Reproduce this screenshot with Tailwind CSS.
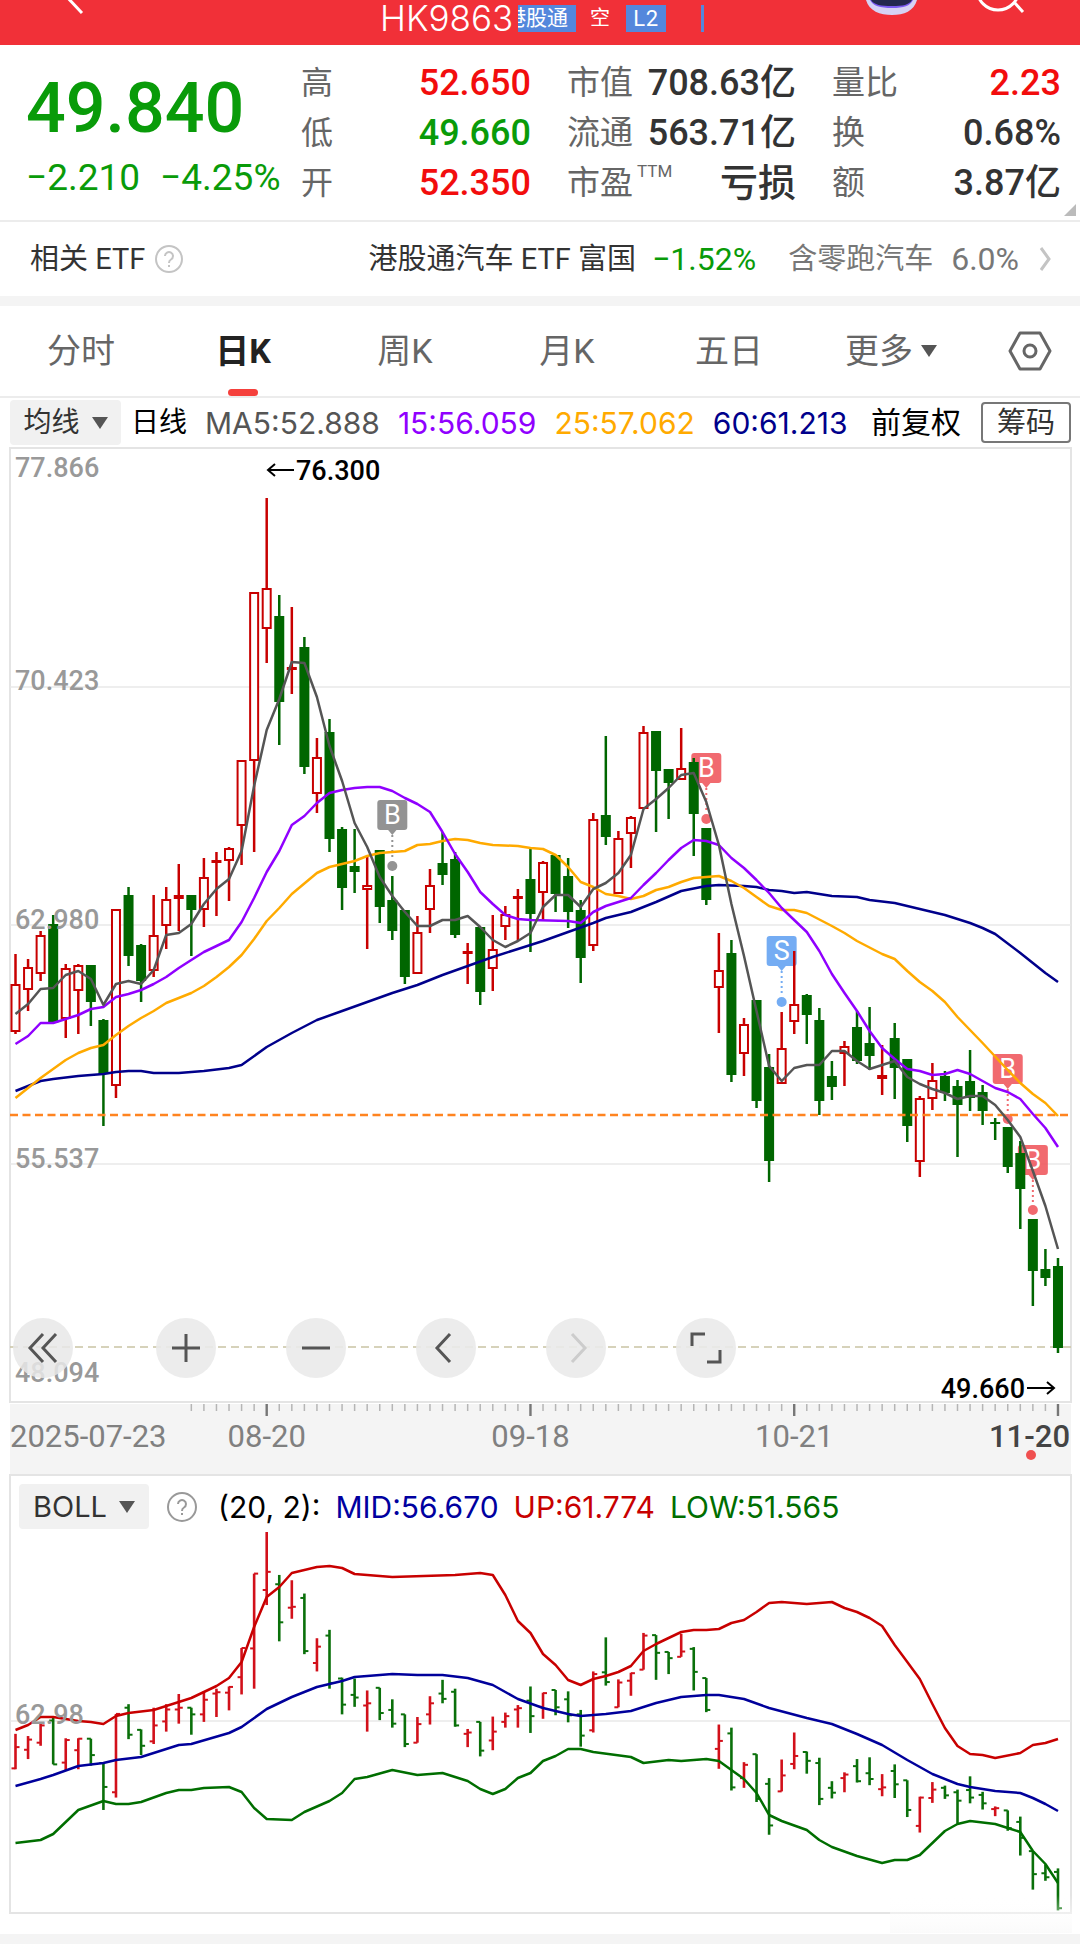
<!DOCTYPE html>
<html lang="zh-CN">
<head>
    <meta charset="UTF-8">
    <meta name="viewport" content="width=device-width, initial-scale=1.0">
    <title>HK9863</title>
    <script src="https://cdn.jsdelivr.net/npm/@tailwindcss/browser@4"></script>
</head>
<body class="bg-white font-['Roboto','Noto_Sans_CJK_SC',sans-serif] text-[#333]">
    <!-- Title bar -->
    <header class="relative flex h-[45px] items-start justify-center overflow-hidden bg-[#f13038] text-white">
        <button aria-label="返回" class="absolute left-[64px] top-0">
            <svg class="block h-4 w-6" viewBox="0 0 24 16" fill="none" stroke="#fff" stroke-width="3"><path d="M2 -4 L18 13"/></svg>
        </button>
        <div class="absolute left-[380px] top-0 flex items-center">
            <h1 class="w-[138px] shrink-0 font-['Inter',sans-serif] text-[35px] leading-[36px] font-light">HK9863</h1>
            <span class="flex h-[27px] w-[58px] shrink-0 justify-end overflow-hidden bg-[#5487dc] pr-2 text-[21px] leading-[26px] whitespace-nowrap">港股通</span>
            <span class="ml-[14px] text-[20px] leading-[27px]">空</span>
            <span class="ml-4 h-[27px] w-[40px] bg-[#5487dc] text-center text-[22px] leading-[27px] tracking-wide">L2</span>
            <span class="ml-[35px] h-[27px] w-[3px] bg-[#5487dc]"></span>
        </div>
        <button aria-label="助手" class="absolute left-[864px] top-0">
            <svg class="block h-4 w-14" viewBox="0 0 56 16"><path d="M2 0C5 11 16 15 28 15S50 11 53 0Z" fill="#d6d2f4"/><path d="M6 0C9 6 16 8 28 8S46 6 49 0Z" fill="#7a5af0"/><path d="M7 0C10 5 17 6 28 6S45 5 48 0Z" fill="#23284e"/></svg>
        </button>
        <button aria-label="搜索" class="absolute left-[976px] top-0">
            <svg class="block h-4 w-[52px]" viewBox="0 0 52 16" fill="none" stroke="#fff" stroke-width="3"><circle cx="22" cy="-11" r="21"/><path d="M38 2 L47 12"/></svg>
        </button>
    </header>

    <!-- Quote summary -->
    <section class="relative flex h-[177px] items-start border-b-2 border-[#ececec] pl-[26px] pr-[19px] pt-[13px]">
        <div class="w-[275px] shrink-0 text-[#099b09]">
            <div class="pt-2 text-[70px] leading-[84px] font-medium">49.840</div>
            <div class="flex gap-5 text-[37px] leading-[56px]"><span>−2.210</span><span>−4.25%</span></div>
        </div>
        <dl class="flex w-[230px] shrink-0 flex-col text-[36px] leading-[50px] font-medium">
            <div class="flex justify-between"><dt class="text-[32px] font-normal text-[#666]">高</dt><dd class="text-[#f20d0d]">52.650</dd></div>
            <div class="flex justify-between"><dt class="text-[32px] font-normal text-[#666]">低</dt><dd class="text-[#099b09]">49.660</dd></div>
            <div class="flex justify-between"><dt class="text-[32px] font-normal text-[#666]">开</dt><dd class="text-[#f20d0d]">52.350</dd></div>
        </dl>
        <dl class="ml-9 flex w-[229px] shrink-0 flex-col text-[36px] leading-[50px] font-medium">
            <div class="flex justify-between"><dt class="text-[33px] font-normal text-[#666]">市值</dt><dd>708.63亿</dd></div>
            <div class="flex justify-between"><dt class="text-[33px] font-normal text-[#666]">流通</dt><dd>563.71亿</dd></div>
            <div class="flex justify-between"><dt class="flex text-[33px] font-normal text-[#666]">市盈<span class="pl-1 text-[17px] leading-[26px]">TTM</span></dt><dd class="text-[38px]">亏损</dd></div>
        </dl>
        <dl class="ml-9 flex grow flex-col text-[36px] leading-[50px] font-medium">
            <div class="flex justify-between"><dt class="text-[33px] font-normal text-[#666]">量比</dt><dd class="text-[#f20d0d]">2.23</dd></div>
            <div class="flex justify-between"><dt class="text-[33px] font-normal text-[#666]">换</dt><dd>0.68%</dd></div>
            <div class="flex justify-between"><dt class="text-[33px] font-normal text-[#666]">额</dt><dd>3.87亿</dd></div>
        </dl>
        <svg class="absolute bottom-1 right-1 h-3 w-3" viewBox="0 0 12 12"><path d="M12 0V12H0Z" fill="#bbb"/></svg>
    </section>

    <!-- Related ETF -->
    <section class="flex h-[74px] items-center pl-[30px] pr-[29px] text-[29px] leading-[40px]">
        <span>相关 ETF</span>
        <button aria-label="说明" class="ml-2">
            <svg class="block h-8 w-8" viewBox="0 0 32 32" fill="none" stroke="#c4c4c4" stroke-width="2"><circle cx="16" cy="16" r="13"/><path d="M12 13a4 4 0 1 1 6 3.500q-2 1.200-2 3.500M16 22v2"/></svg>
        </button>
        <a href="#" class="ml-auto flex items-center">
            <span>港股通汽车 ETF 富国</span>
            <span class="ml-4 text-[32px] text-[#099b09]">−1.52%</span>
            <span class="ml-8 text-[#777]">含零跑汽车</span>
            <span class="ml-[18px] text-[32px] text-[#777]">6.0%</span>
            <svg class="ml-5 h-6 w-3" viewBox="0 0 12 24" fill="none" stroke="#c4c4c4" stroke-width="3"><path d="M2 1L10 12L2 23"/></svg>
        </a>
    </section>
    <div class="h-[10px] bg-[#f4f4f4]"></div>

    <!-- Period tabs -->
    <nav class="flex h-[92px] items-center border-b-2 border-[#ececec] text-[34px] leading-[48px] text-[#666]">
        <button class="w-[15%] text-center">分时</button>
        <button class="relative flex h-full w-[15%] items-center justify-center font-bold text-[#222]">日K<span class="absolute bottom-0 h-[7px] w-[30px] rounded-sm bg-[#f5403c]"></span></button>
        <button class="w-[15%] text-center">周K</button>
        <button class="w-[15%] text-center">月K</button>
        <button class="w-[15%] text-center">五日</button>
        <button class="flex w-[15%] items-center justify-center gap-2">更多<svg class="h-3 w-4" viewBox="0 0 16 12"><path d="M0 0H16L8 12Z" fill="#555"/></svg></button>
        <button aria-label="设置" class="ml-auto mr-7">
            <svg class="block h-11 w-11" viewBox="0 0 44 44" fill="none" stroke="#666" stroke-width="3" stroke-linejoin="round"><path d="M12 4H32L42 22L32 40H12L2 22Z"/><circle cx="22" cy="22" r="6"/></svg>
        </button>
    </nav>

    <!-- Moving averages -->
    <div class="flex h-[49px] items-center whitespace-nowrap pl-[10px] pr-[9px] text-[28px] leading-[40px]">
        <button class="flex h-[45px] w-[111px] shrink-0 items-center justify-center gap-3 rounded-sm bg-[#f1f1f1]">均线<svg class="h-3 w-4" viewBox="0 0 16 12"><path d="M0 0H16L8 12Z" fill="#555"/></svg></button>
        <span class="ml-[10px] text-black">日线</span>
        <div class="ml-[18px] flex gap-[18px] font-['Inter',sans-serif] text-[30px]">
            <span class="text-[#555]">MA5:52.888</span>
            <span class="text-[#9000ff]">15:56.059</span>
            <span class="text-[#ffaa00]">25:57.062</span>
            <span class="text-[#00008b]">60:61.213</span>
        </div>
        <span class="ml-auto text-[30px] text-black">前复权</span>
        <button class="ml-5 h-[41px] w-[90px] shrink-0 rounded-sm border-2 border-[#777] text-[29px] leading-[36px]">筹码</button>
    </div>

    <!-- Candles -->
    <section class="relative">
        <svg id="k-chart" class="block w-full" viewBox="0 447 1080 957"></svg>
        <div class="absolute bottom-[26px] left-[13px] flex">
            <button aria-label="最早" class="mr-[83px] flex size-[60px] items-center justify-center rounded-full bg-[#e8e8e8]/85"><svg class="size-8" viewBox="0 0 32 32" fill="none" stroke="#555" stroke-width="3"><path d="M16 2L3 16L16 30M29 2L16 16L29 30"/></svg></button>
            <div class="flex gap-[70px]">
                <button aria-label="放大" class="flex size-[60px] items-center justify-center rounded-full bg-[#eaeaea]/90"><svg class="size-8" viewBox="0 0 32 32" fill="none" stroke="#555" stroke-width="3"><path d="M16 2V30M2 16H30"/></svg></button>
                <button aria-label="缩小" class="flex size-[60px] items-center justify-center rounded-full bg-[#eaeaea]/90"><svg class="size-8" viewBox="0 0 32 32" fill="none" stroke="#555" stroke-width="3"><path d="M2 16H30"/></svg></button>
                <button aria-label="左移" class="flex size-[60px] items-center justify-center rounded-full bg-[#eaeaea]/90"><svg class="size-8" viewBox="0 0 32 32" fill="none" stroke="#555" stroke-width="3"><path d="M20 2L7 16L20 30"/></svg></button>
                <button aria-label="右移" class="flex size-[60px] items-center justify-center rounded-full bg-[#eaeaea]/90"><svg class="size-8" viewBox="0 0 32 32" fill="none" stroke="#ccc" stroke-width="3"><path d="M12 2L25 16L12 30"/></svg></button>
                <button aria-label="全屏" class="flex size-[60px] items-center justify-center rounded-full bg-[#eaeaea]/90"><svg class="size-8" viewBox="0 0 32 32" fill="none" stroke="#555" stroke-width="3"><path d="M2 14V2H15M30 18V30H17"/></svg></button>
            </div>
        </div>
    </section>

    <!-- Date axis -->
    <svg id="axis" class="block w-full" viewBox="0 1404 1080 70"></svg>

    <!-- BOLL -->
    <section class="relative">
        <svg id="boll-chart" class="block w-full" viewBox="0 1474 1080 460"></svg>
        <div class="absolute left-[19px] top-[10px] flex h-[45px] items-center font-['Inter',sans-serif] text-[30px] leading-[40px] whitespace-nowrap">
            <button class="flex h-full w-[130px] items-center justify-center gap-3 rounded-sm bg-[#f1f1f1] text-[29px]">BOLL<svg class="h-3 w-4" viewBox="0 0 16 12"><path d="M0 0H16L8 12Z" fill="#555"/></svg></button>
            <button aria-label="BOLL说明" class="ml-[17px]">
                <svg class="block h-8 w-8" viewBox="0 0 32 32" fill="none" stroke="#999" stroke-width="2"><circle cx="16" cy="16" r="14"/><path d="M12 13a4 4 0 1 1 6 3.500q-2 1.200-2 3.500M16 22v2"/></svg>
            </button>
            <span class="ml-5 text-black">(20, 2):</span>
            <span class="ml-[15px] text-[#0000a0]">MID:56.670</span>
            <span class="ml-[15px] text-[#c80000]">UP:61.774</span>
            <span class="ml-[15px] text-[#006e00]">LOW:51.565</span>
        </div>
    </section>
    <div class="h-[10px] bg-[#f4f4f4]"></div>

    <script>
        const RED = '#c80000';
        const GREEN = '#006600';

        // [up, high, body top, body bottom, low]
        const candles = [
            [1,954,984,1032,1034],[1,959,967,990,1011],[1,931,935,974,981],[0,915,924,1023,1023],[1,964,968,1019,1038],
            [1,964,965,991,1034],[0,965,965,1002,1026],[0,1019,1020,1074,1126],[1,909,909,1086,1098],[0,887,895,956,966],
            [0,944,945,981,1002],[1,895,935,971,977],[1,887,899,926,949],[1,864,895,899,931],[0,895,895,910,956],
            [1,858,877,910,927],[1,852,860,863,916],[1,847,848,861,901],[1,760,760,826,865],[1,592,592,761,852],
            [1,498,588,629,663],[0,595,616,702,745],[1,607,667,669,694],[0,637,647,767,774],[1,738,757,794,813],
            [0,719,732,839,852],[0,827,829,888,910],[0,829,866,872,893],[1,856,885,890,949],[0,850,850,907,923],
            [0,876,900,931,940],[0,910,910,977,984],[1,916,932,974,974],[1,869,885,910,933],[0,832,863,875,885],
            [0,852,859,935,938],[1,943,951,954,984],[0,927,927,992,1005],[1,915,949,969,991],[1,906,914,927,940],
            [1,889,896,899,940],[0,847,879,914,952],[1,861,862,893,920],[0,855,855,894,912],[0,858,876,912,928],
            [0,900,910,958,983],[1,813,819,946,951],[0,736,815,837,845],[1,831,838,894,894],[1,816,817,834,868],
            [1,726,732,809,809],[0,731,731,771,832],[0,769,769,783,819],[1,728,768,780,780],[0,758,762,814,856],
            [0,828,828,900,905],[1,933,970,988,1033],[0,940,953,1075,1082],[1,1018,1024,1054,1076],[0,1000,1000,1101,1108],
            [0,1054,1067,1161,1182],[1,1012,1048,1084,1084],[1,951,1004,1022,1034],[0,994,995,1015,1044],[0,1008,1020,1101,1115],
            [0,1061,1076,1087,1100],[1,1041,1046,1054,1086],[0,1011,1027,1061,1064],[0,1007,1043,1056,1070],[1,1045,1075,1079,1095],
            [0,1023,1038,1068,1099],[0,1059,1059,1126,1142],[1,1096,1098,1162,1177],[1,1063,1080,1099,1110],[0,1071,1076,1093,1101],
            [0,1080,1086,1105,1157],[0,1050,1081,1098,1111],[0,1085,1092,1111,1125],[0,1118,1122,1124,1140],[0,1127,1127,1167,1173],
            [0,1141,1153,1189,1229],[0,1219,1219,1271,1306],[0,1249,1269,1278,1286],[0,1258,1266,1348,1353]
        ];

        // index, y pairs
        const ma5 = [0,1014,1,1004,2,989,3,988,4,975,5,971,6,979,7,1005,8,984,9,981,10,984,11,970,12,935,13,933,14,924,15,904,16,889,17,879,18,851,19,786,20,730,21,699,22,662,23,663,24,697,25,746,26,781,27,823,28,847,29,877,30,896,31,912,32,926,33,926,34,920,35,920,36,916,37,927,38,940,39,947,40,941,41,933,42,907,43,895,44,895,45,907,46,889,47,883,48,873,49,855,50,809,51,799,52,788,53,775,54,773,55,802,56,845,57,904,58,956,59,1011,60,1066,61,1081,62,1068,63,1065,64,1065,65,1051,66,1051,67,1061,68,1069,69,1065,70,1061,71,1077,72,1084,73,1089,74,1093,75,1099,76,1096,77,1096,78,1105,79,1120,80,1137,81,1171,82,1206,83,1249];
        const ma15 = [0,1044,1,1036,2,1023,3,1023,4,1019,5,1015,6,1009,7,1007,8,997,9,994,10,990,11,984,12,977,13,968,14,960,15,952,16,946,17,940,18,922,19,898,20,872,21,851,22,825,23,816,24,803,25,793,26,790,27,788,28,787,29,787,30,791,31,798,32,804,33,812,34,832,35,854,36,872,37,892,38,904,39,915,40,919,41,920,44,921,45,923,46,912,47,906,48,902,49,898,50,885,51,873,52,860,53,848,54,840,55,841,56,845,57,858,58,868,59,880,60,893,61,908,62,920,63,932,64,951,65,974,66,993,67,1011,68,1031,69,1048,70,1059,71,1069,72,1071,73,1075,74,1074,75,1070,76,1074,77,1081,78,1088,79,1092,80,1099,81,1114,82,1128,83,1147];
        const ma25 = [0,1098,2,1078,4,1060,5,1053,6,1048,7,1045,8,1035,9,1026,10,1018,11,1011,12,1003,13,998,14,993,15,986,16,977,17,967,18,955,19,939,20,921,21,908,22,894,24,873,25,867,26,864,27,861,28,856,29,853,30,852,31,851,32,845,33,844,34,841,35,839,36,840,37,843,38,845,40,846,41,848,42,849,43,855,44,867,45,882,46,887,47,894,48,896,49,899,50,896,51,890,52,887,53,882,54,878,55,877,56,876,57,881,58,888,59,897,60,906,61,910,62,910,63,913,65,926,66,933,67,941,69,954,70,959,71,971,72,982,73,991,74,1002,75,1017,77,1043,79,1070,80,1083,81,1094,82,1103,83,1116];
        const ma60 = [0,1091,2,1081,3,1079,5,1076,7,1074,8,1072,9,1071,10,1071,11,1073,13,1073,15,1071,17,1068,18,1065,20,1047,22,1033,24,1020,26,1011,28,1002,30,993,32,985,34,975,36,966,38,957,40,949,42,941,44,932,46,923,47,918,49,912,51,902,53,891,55,886,56,885,58,886,59,887,60,890,61,891,62,893,63,892,65,896,67,897,68,900,70,903,72,909,74,915,76,923,77,928,78,934,80,953,82,973,83,982];
        const up = [0,1730,1,1725,2,1717,3,1717,4,1719,5,1721,6,1722,7,1724,8,1716,9,1713,11,1710,12,1706,13,1702,14,1698,15,1692,16,1686,17,1678,18,1662,19,1627,20,1597,21,1587,22,1573,24,1567,25,1566,26,1568,27,1574,28,1575,30,1577,35,1575,37,1573,38,1575,39,1595,40,1621,41,1633,42,1654,43,1665,44,1680,45,1685,46,1679,47,1676,48,1672,49,1666,50,1651,51,1644,52,1638,53,1632,54,1630,55,1630,56,1629,57,1623,58,1620,59,1612,60,1603,61,1602,62,1603,63,1604,65,1602,66,1608,67,1612,68,1618,69,1626,70,1645,71,1662,72,1679,73,1704,74,1728,75,1746,76,1754,77,1755,78,1758,80,1753,81,1745,82,1743,83,1739];
        const mid = [0,1786,2,1779,3,1775,5,1766,7,1763,8,1760,10,1757,13,1745,14,1744,17,1733,18,1727,20,1709,22,1697,24,1687,26,1681,27,1677,30,1674,32,1675,34,1675,36,1678,38,1685,40,1699,42,1708,44,1714,45,1716,47,1714,49,1711,51,1703,53,1697,55,1695,56,1695,58,1699,60,1708,63,1718,65,1724,67,1734,69,1745,71,1760,73,1774,75,1784,76,1787,78,1791,80,1793,81,1798,82,1804,83,1811];
        const low = [0,1843,2,1840,3,1834,5,1810,7,1801,8,1804,9,1804,10,1802,12,1793,13,1790,14,1790,15,1788,17,1787,18,1792,19,1808,20,1819,22,1820,23,1812,25,1801,26,1793,27,1779,28,1777,30,1770,32,1775,34,1773,35,1777,36,1781,37,1789,38,1794,39,1789,40,1778,41,1773,42,1761,43,1756,44,1749,45,1749,46,1752,49,1757,50,1763,52,1760,53,1761,55,1759,56,1761,57,1770,58,1779,59,1793,60,1815,61,1821,63,1830,64,1840,65,1847,67,1856,69,1863,70,1860,71,1860,72,1855,73,1843,74,1831,75,1824,76,1821,78,1824,79,1828,80,1832,81,1851,82,1864,83,1883];

        const x = i => 15.5 + i * 12.56;
        const ohlcY = y => 1721 + (y - 925) * 0.4426;

        function line(x1, y1, x2, y2, color, width, extra = '') {
            return `<line x1="${x1}" y1="${y1}" x2="${x2}" y2="${y2}" stroke="${color}" stroke-width="${width}" ${extra}/>`;
        }

        function curve(points, color) {
            let d = '';
            for (let i = 0; i < points.length; i += 2) {
                d += (i ? 'L' : 'M') + x(points[i]).toFixed(1) + ' ' + points[i + 1];
            }
            return `<path d="${d}" fill="none" stroke="${color}" stroke-width="2.5" stroke-linejoin="round"/>`;
        }

        function label(tx, ty, text, color = '#999', size = 27, anchor = 'start', weight = 500) {
            return `<text x="${tx}" y="${ty}" font-size="${size}" font-weight="${weight}" fill="${color}" text-anchor="${anchor}">${text}</text>`;
        }

        function marker(cx, i, top, dot, text, color) {
            return `<g opacity="0.9"><rect x="${cx - 15}" y="${top}" width="30" height="30" rx="3" fill="${color}"/>
                <path d="M${x(i) - 5} ${top + 29}h10l-5 6z" fill="${color}"/>
                ${line(x(i), top + 35, x(i), dot - 6, color, 2, 'stroke-dasharray="2 3"')}
                <circle cx="${x(i)}" cy="${dot}" r="5" fill="${color}"/></g>
                <text x="${cx}" y="${top + 24}" font-size="27" fill="#fff" text-anchor="middle">${text}</text>`;
        }

        function drawCandles() {
            let s = '<rect x="10" y="448" width="1061" height="954" fill="none" stroke="#e4e4e4" stroke-width="2"/>';
            [687, 925, 1164].forEach(y => { s += line(10, y, 1071, y, '#e8e8e8', 1.5); });
            s += line(10, 1347, 1071, 1347, '#c9c4a4', 1.5, 'stroke-dasharray="8 5"');
            s += marker(x(30), 30, 800, 866, 'B', '#888');
            s += marker(x(55), 55, 753, 819, 'B', '#f05a60');
            s += marker(x(61), 61, 936, 1002, 'S', '#66a4f2');
            s += marker(x(79), 79, 1054, 1119, 'B', '#f05a60');
            s += marker(x(81), 81, 1145, 1210, 'B', '#f05a60');
            candles.forEach(([isUp, high, top, bottom, lowest], i) => {
                const cx = x(i);
                if (isUp) {
                    s += line(cx, high, cx, top, RED, 2.5) + line(cx, bottom, cx, lowest, RED, 2.5);
                    s += `<rect x="${cx - 4}" y="${top + 1}" width="8" height="${Math.max(bottom - top - 2, 1)}" fill="#fff" stroke="${RED}" stroke-width="2"/>`;
                } else {
                    s += line(cx, high, cx, lowest, GREEN, 2.5);
                    s += `<rect x="${cx - 5}" y="${top}" width="10" height="${bottom - top}" fill="${GREEN}"/>`;
                }
            });
            s += line(10, 1115, 1071, 1115, '#ff8420', 2.4, 'stroke-dasharray="8 4.500"');
            s += curve(ma60, '#00008b') + curve(ma25, '#ffaa00') + curve(ma15, '#9000ff') + curve(ma5, '#555');
            s += label(15, 477, '77.866') + label(15, 690, '70.423') + label(15, 929, '62.980') + label(15, 1168, '55.537') + label(15, 1382, '48.094');
            s += '<path d="M294 470H268M275 464l-7 6l7 6" fill="none" stroke="#000" stroke-width="2"/>' + label(296, 480, '76.300', '#000');
            s += label(1025, 1398, '49.660', '#000', 27, 'end') + '<path d="M1027 1388H1054M1047 1382l7 6l-7 6" fill="none" stroke="#000" stroke-width="2"/>';
            document.getElementById('k-chart').innerHTML = s;
        }

        function drawAxis() {
            let s = '<rect x="10" y="1404" width="1061" height="70" fill="#f4f4f4"/>';
            for (let i = 14; i < 84; i++) {
                const major = [20, 41, 62, 83].includes(i);
                s += line(x(i), 1404, x(i), major ? 1416 : 1411, major ? '#777' : '#b5b5b5', major ? 2.4 : 1.5);
            }
            s += label(10, 1447, '2025-07-23', '#808080', 31, 'start', 400) + label(x(20), 1447, '08-20', '#808080', 31, 'middle', 400);
            s += label(x(41), 1447, '09-18', '#808080', 31, 'middle', 400) + label(x(62), 1447, '10-21', '#808080', 31, 'middle', 400);
            s += label(1070, 1447, '11-20', '#444', 31, 'end') + '<circle cx="1031" cy="1455" r="5" fill="#f05050"/>';
            document.getElementById('axis').innerHTML = s;
        }

        function drawBoll() {
            let s = '<defs><linearGradient id="fade" x1="0" y1="0" x2="0" y2="1"><stop offset="0" stop-color="#fff" stop-opacity="0"/><stop offset="1" stop-color="#fafafa" stop-opacity="0.9"/></linearGradient></defs>';
            s += '<rect x="10" y="1475" width="1061" height="438" fill="none" stroke="#e4e4e4" stroke-width="2"/>';
            s += line(10, 1721, 1071, 1721, '#e8e8e8', 1.5);
            candles.forEach(([isUp, high, top, bottom, lowest], i) => {
                const rising = isUp || i === 78;
                const color = rising ? '#d2101a' : '#0a700a';
                const open = ohlcY(rising ? bottom : top);
                const close = ohlcY(rising ? top : bottom);
                s += line(x(i), ohlcY(high), x(i), ohlcY(lowest), color, 2.6);
                s += line(x(i) - 4, open, x(i), open, color, 2) + line(x(i), close, x(i) + 4, close, color, 2);
            });
            s += curve(up, RED) + curve(mid, '#00009b') + curve(low, '#006e00');
            s += label(15, 1724, '62.98');
            s += '<rect x="890" y="1895" width="182" height="38" fill="url(#fade)"/>';
            document.getElementById('boll-chart').innerHTML = s;
        }

        drawCandles();
        drawAxis();
        drawBoll();
    </script>
</body>
</html>
